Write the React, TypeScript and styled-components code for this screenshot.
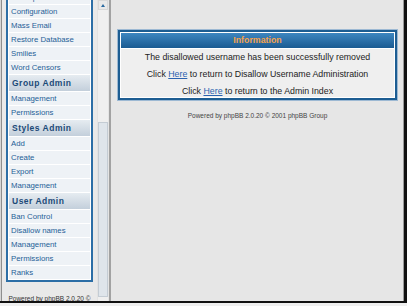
import * as React from 'react'
import styled, { createGlobalStyle } from 'styled-components'

const GlobalStyle = createGlobalStyle`
  html, body {
    margin: 0;
    padding: 0;
    background: #efefef;
  }
  body {
    font-family: "Liberation Sans", Arial, sans-serif;
  }
`

const Window = styled.div`
  display: flex;
  width: 404px;
  height: 301px;
  border-right: 3px solid #111;
  border-bottom: 2px solid #111;
  overflow: hidden;
  background: #e6e6e6;
`

const NavFrame = styled.div`
  display: flex;
  flex: none;
  width: 107px;
  border-left: 1px solid #d6d6d6;
`

const NavBody = styled.div`
  flex: 1;
  overflow: hidden;
  padding-left: 4px;
  background: #e9e9e9;
  border-left: 1px solid #8e8e8e;
`

const NavTable = styled.div`
  display: flex;
  flex-direction: column;
  gap: 1px;
  width: 87px;
  box-sizing: border-box;
  margin-top: -12px;
  padding: 1px;
  background: #fff;
  border: 2px solid #2c6ea6;
`

const NavHeader = styled.div`
  height: 16px;
  line-height: 16px;
  padding-left: 3px;
  font-size: 8.5px;
  font-weight: bold;
  letter-spacing: 0.5px;
  color: #1c4a78;
  background: linear-gradient(#e6ecf1, #c3cfdb);
  white-space: nowrap;
`

const NavRow = styled.div`
  height: 13px;
  line-height: 13px;
  padding-left: 2px;
  font-size: 7.8px;
  color: #1e5f96;
  background: #eef2f6;
  white-space: nowrap;
  overflow: hidden;
`

const NavFooter = styled.div`
  margin-top: 13px;
  margin-left: -4px;
  text-align: center;
  font-size: 6.5px;
  line-height: 8px;
  color: #333;
`

const Scrollbar = styled.div`
  display: flex;
  flex-direction: column;
  flex: none;
  width: 10px;
  background: #efefef;
  border-left: 1px solid #e2e2e2;
`

const ScrollButton = styled.div`
  display: flex;
  align-items: center;
  justify-content: center;
  height: 10px;
  box-sizing: border-box;
  background: #e9e9e9;
  border: 1px solid #d8d8d8;
`

const Arrow = styled.div`
  width: 0;
  height: 0;
  border-left: 2.5px solid transparent;
  border-right: 2.5px solid transparent;
  border-bottom: 3px solid #2a6aa0;
`

const Track = styled.div`
  height: 112px;
  flex: none;
`

const Thumb = styled.div`
  height: 175px;
  flex: none;
  box-sizing: border-box;
  background: #dfe5eb;
  border: 1px solid #c4ccd4;
`

const Divider = styled.div`
  flex: none;
  width: 1px;
  background: #e4e4e4;
  border-right: 2px solid #a2a2a2;
`

const MainFrame = styled.div`
  flex: 1;
  padding-top: 30px;
  background: #e6e6e6;
  box-shadow: inset -1px 0 #9a9a9a;
`

const InfoTable = styled.div`
  display: flex;
  flex-direction: column;
  gap: 1px;
  margin: 0 7px;
  padding: 1px;
  background: #fff;
  border: 2px solid #1d5d92;
  box-shadow: 0 0 0 1px #9db9d3;
`

const InfoHeader = styled.div`
  height: 15px;
  line-height: 15px;
  text-align: center;
  font-size: 8.8px;
  font-weight: bold;
  color: #f5a24c;
  background: linear-gradient(#3d86c0, #1a5b92);
`

const InfoBody = styled.div`
  height: 48px;
  text-align: center;
  font-size: 8.8px;
  line-height: 17px;
  color: #222;
  background: #efefef;
`

const Line = styled.div`
  white-space: nowrap;
`

const Link = styled.a`
  color: #2b63b0;
  text-decoration: underline;
`

const Copyright = styled.div`
  margin-top: 12px;
  text-align: center;
  font-size: 6.5px;
  line-height: 8px;
  color: #444;
`

const sections = [
  { rows: ['Backup Database', 'Configuration', 'Mass Email', 'Restore Database', 'Smilies', 'Word Censors'] },
  { title: 'Group Admin', rows: ['Management', 'Permissions'] },
  { title: 'Styles Admin', rows: ['Add', 'Create', 'Export', 'Management'] },
  { title: 'User Admin', rows: ['Ban Control', 'Disallow names', 'Management', 'Permissions', 'Ranks'] },
]

export default function App() {
  return (
    <>
      <GlobalStyle />
      <Window>
        <NavFrame>
          <NavBody>
            <NavTable>
              {sections.map((s, i) => (
                <React.Fragment key={i}>
                  {s.title && <NavHeader>{s.title}</NavHeader>}
                  {s.rows.map((r) => (
                    <NavRow key={r}>{r}</NavRow>
                  ))}
                </React.Fragment>
              ))}
            </NavTable>
            <NavFooter>Powered by phpBB 2.0.20 © 2001 phpBB Group</NavFooter>
          </NavBody>
          <Scrollbar>
            <ScrollButton>
              <Arrow />
            </ScrollButton>
            <Track />
            <Thumb />
          </Scrollbar>
        </NavFrame>
        <Divider />
        <MainFrame>
          <InfoTable>
            <InfoHeader>Information</InfoHeader>
            <InfoBody>
              <Line>The disallowed username has been successfully removed</Line>
              <Line>
                Click <Link href="#">Here</Link> to return to Disallow Username Administration
              </Line>
              <Line>
                Click <Link href="#">Here</Link> to return to the Admin Index
              </Line>
            </InfoBody>
          </InfoTable>
          <Copyright>Powered by phpBB 2.0.20 © 2001 phpBB Group</Copyright>
        </MainFrame>
      </Window>
    </>
  )
}
